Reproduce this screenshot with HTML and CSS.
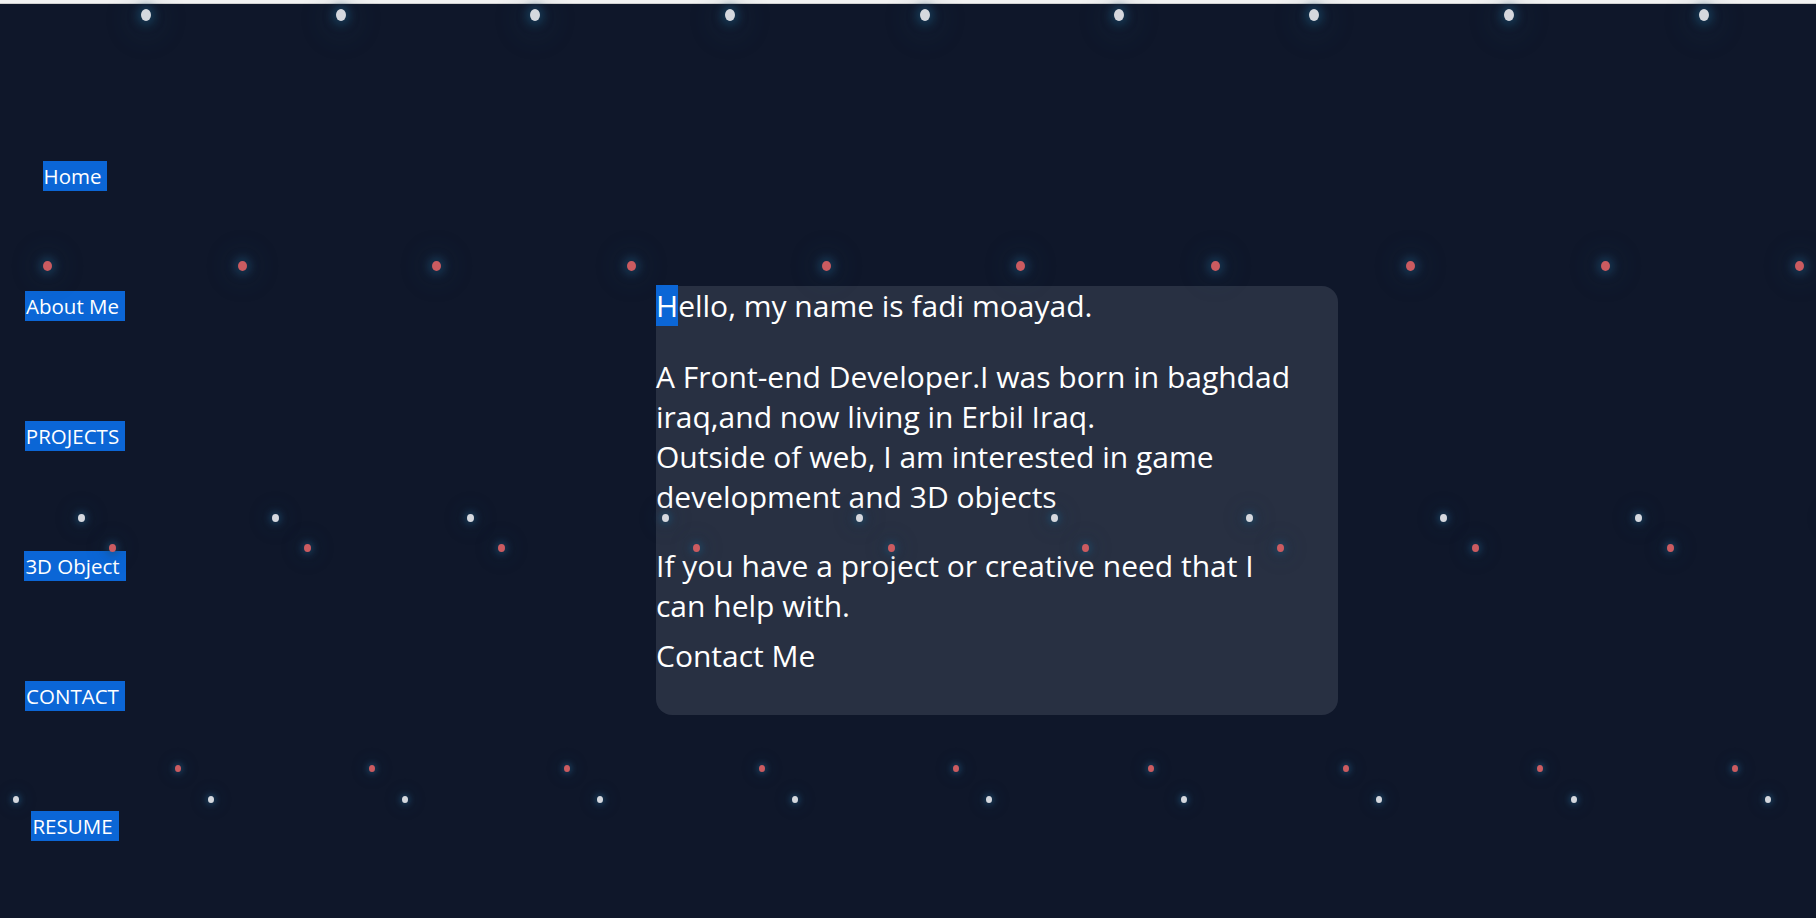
FILE: index.html
```html
<!DOCTYPE html>
<html lang="en">
<head>
<meta charset="utf-8">
<title>fadi moayad</title>
<link rel="stylesheet" href="styles.css">
</head>
<body>
<div class="topbar"></div>
<div class="layout">
  <nav class="nav">
    <a class="nav-link" href="#">Home</a>
    <a class="nav-link" href="#">About Me</a>
    <a class="nav-link" href="#">PROJECTS</a>
    <a class="nav-link" href="#">3D Object</a>
    <a class="nav-link" href="#">CONTACT</a>
    <a class="nav-link" href="#">RESUME</a>
  </nav>
  <main class="content">
    <section class="card">
      <p class="intro"><span class="sel">H</span>ello, my name is fadi moayad.</p>
      <p class="para">A Front-end Developer.I was born in baghdad iraq,and now living in Erbil Iraq.<br>Outside of web, I am interested in game development and 3D objects</p>
      <p class="para para-last">If you have a project or creative need that I can help with.</p>
      <div class="contact">Contact Me</div>
    </section>
  </main>
</div>
<div class="sky">
  <div class="row row-a"><i></i><i></i><i></i><i></i><i></i><i></i><i></i><i></i><i></i><i></i></div>
  <div class="row row-b"><i></i><i></i><i></i><i></i><i></i><i></i><i></i><i></i><i></i><i></i></div>
  <div class="row row-c"><i></i><i></i><i></i><i></i><i></i><i></i><i></i><i></i><i></i><i></i></div>
  <div class="row row-d"><i></i><i></i><i></i><i></i><i></i><i></i><i></i><i></i><i></i><i></i></div>
  <div class="row row-e"><i></i><i></i><i></i><i></i><i></i><i></i><i></i><i></i><i></i><i></i></div>
  <div class="row row-f"><i></i><i></i><i></i><i></i><i></i><i></i><i></i><i></i><i></i><i></i></div>
</div>
</body>
</html>
```

FILE: styles.css
```css
* { box-sizing: border-box; }

html, body {
  margin: 0;
  height: 918px;
  overflow: hidden;
}

body {
  background: #0f172a;
  color: #ffffff;
  font-family: "Comic Sans MS", "Open Sans", "DejaVu Sans", sans-serif;
  position: relative;
}

.topbar {
  height: 4px;
  background: #f2f2f2;
  border-bottom: 1px solid #cfcfcf;
}

.layout {
  display: flex;
  align-items: flex-start;
}

.nav {
  width: 150px;
  flex: none;
  display: flex;
  flex-direction: column;
  align-items: center;
  gap: 100px;
  padding-top: 157px;
}

.nav-link {
  display: block;
  height: 30px;
  line-height: 31px;
  font-size: 20.5px;
  padding: 0 6px 0 1px;
  background: #0b66d6;
  color: #ffffff;
  text-decoration: none;
  white-space: nowrap;
}

.content {
  padding-left: 506px;
  padding-top: 282px;
}

.card {
  width: 682px;
  background: #283042;
  border-radius: 16px;
  padding: 0 37px 39px 0;
  font-size: 30px;
  line-height: 40px;
}

.card p { margin: 0; }

.card .para { margin-top: 31px; }

.card .para-last { margin-top: 29px; }

.sel {
  background: #0b66d6;
  color: #ffffff;
}

.contact {
  margin-top: 10px;
}

/* decorative glowing dots over the page */
.sky {
  position: absolute;
  inset: 0;
  pointer-events: none;
  overflow: hidden;
}

.row {
  position: absolute;
  display: flex;
}

.row i {
  display: block;
  flex: none;
  border-radius: 50%;
}

.row-a { top: 9px; left: 141px; gap: 184.7px; }
.row-a i { width: 10px; height: 12px; background: #d5d8de;
  box-shadow: 0 0 8px 4px rgba(30, 80, 115, 0.55), 0 4px 26px 14px rgba(30, 70, 100, 0.12); }

.row-b { top: 261px; left: 43px; gap: 185.7px; }
.row-b i { width: 9px; height: 10px; background: #cb5b60;
  box-shadow: 0 0 8px 4px rgba(30, 80, 115, 0.5), 0 0 24px 12px rgba(30, 70, 100, 0.12); }

.row-c { top: 514px; left: 77.5px; gap: 187.7px; }
.row-c i { width: 7px; height: 8px; background: #d5d8de;
  box-shadow: 0 0 6px 3px rgba(30, 80, 115, 0.5), 0 0 18px 9px rgba(30, 70, 100, 0.1); }

.row-d { top: 544px; left: 109px; gap: 187.7px; }
.row-d i { width: 7px; height: 8px; background: #cb5b60;
  box-shadow: 0 0 6px 3px rgba(30, 80, 115, 0.5), 0 0 18px 9px rgba(30, 70, 100, 0.1); }

.row-e { top: 765px; left: 174.5px; gap: 188.7px; }
.row-e i { width: 6px; height: 7px; background: #cb5b60;
  box-shadow: 0 0 5px 3px rgba(30, 80, 115, 0.45), 0 0 14px 7px rgba(30, 70, 100, 0.1); }

.row-f { top: 796px; left: 13px; gap: 188.7px; }
.row-f i { width: 6px; height: 7px; background: #d5d8de;
  box-shadow: 0 0 5px 3px rgba(30, 80, 115, 0.45), 0 0 14px 7px rgba(30, 70, 100, 0.1); }
```
